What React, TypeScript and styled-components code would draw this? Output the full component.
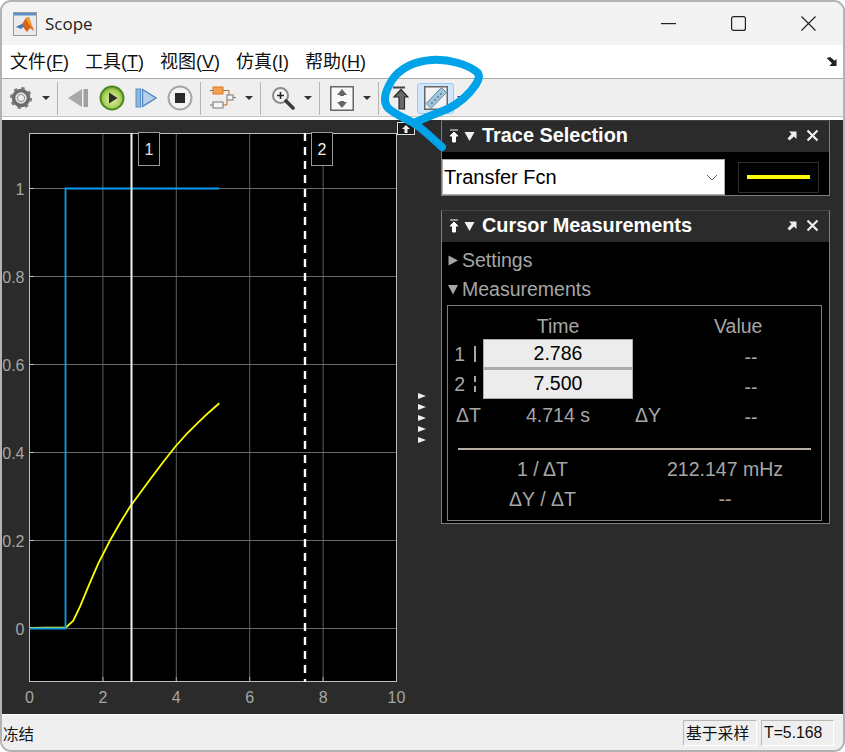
import styled, { createGlobalStyle } from 'styled-components';

const GlobalStyle = createGlobalStyle`
	html, body, #root {
		margin: 0;
		padding: 0;
		width: 845px;
		height: 752px;
		overflow: hidden;
		background: #fff;
	}
`;

const UI_FONT = `'Liberation Sans', 'Noto Sans CJK SC', sans-serif`;

const Window = styled.div`
	position: relative;
	box-sizing: border-box;
	width: 845px;
	height: 752px;
	border: 2px solid #b3b3b3;
	border-radius: 11px;
	overflow: hidden;
	display: flex;
	flex-direction: column;
	background: #f3f3f3;
	font-family: ${UI_FONT};
`;

const TitleBar = styled.div`
	height: 43px;
	flex: none;
	display: flex;
	align-items: center;
	padding-left: 11px;
	background: #f3f3f3;
`;

const AppTitle = styled.div`
	margin-left: 8px;
	font-family: 'Open Sans', sans-serif;
	font-size: 17px;
	color: #222;
`;

const WindowControls = styled.div`
	margin-left: auto;
	display: flex;
	align-items: center;
`;

const WindowControl = styled.div`
	width: 70px;
	display: flex;
	justify-content: center;
`;

const MenuBar = styled.div`
	height: 34px;
	flex: none;
	display: flex;
	align-items: center;
	background: #fff;
	padding: 0 0 3px 8px;
	gap: 16px;
	border-bottom: 1px solid #a9a9a9;
	font-size: 18px;
	color: #111;
	box-sizing: border-box;
`;

const MenuItem = styled.span`
	white-space: nowrap;
	u {
		text-underline-offset: 2px;
	}
`;

const CollapseArrow = styled.div`
	margin-left: auto;
	margin-right: 5px;
	margin-top: 3px;
	display: flex;
`;

const Toolbar = styled.div`
	height: 38px;
	flex: none;
	display: flex;
	align-items: center;
	padding-left: 2px;
	background: #efefef;
	border-bottom: 3px solid #fff;
	box-shadow: inset 0 -1px 0 #c4c4c4;
	box-sizing: content-box;
`;

const Tool = styled.div<{ $w: number; $active?: boolean }>`
	width: ${(p) => p.$w}px;
	height: 31px;
	flex: none;
	box-sizing: border-box;
	display: flex;
	align-items: center;
	justify-content: center;
	border-radius: 3px;
	${(p) =>
		p.$active &&
		`
		background: #cfe6fb;
		border: 1px solid #9cc9f2;
	`}
`;

const ToolSep = styled.div<{ $w: number }>`
	width: ${(p) => p.$w}px;
	height: 33px;
	flex: none;
	display: flex;
	justify-content: center;
	&::before {
		content: '';
		width: 1px;
		background: #b5b5b5;
	}
`;

const Caret = styled.div<{ $w: number }>`
	width: ${(p) => p.$w}px;
	flex: none;
	display: flex;
	justify-content: center;
	&::before {
		content: '';
		border-left: 4px solid transparent;
		border-right: 4px solid transparent;
		border-top: 4px solid #333;
	}
`;

const Body = styled.div`
	height: 594px;
	flex: none;
	display: flex;
	background: #2b2b2b;
	border-bottom: 1px solid #fff;
	box-sizing: content-box;
`;

const PlotPane = styled.div`
	position: relative;
	width: 416px;
	flex: none;
`;

const ChartSvg = styled.svg`
	display: block;
	font-family: ${UI_FONT};
`;

const UndockButton = styled.div`
	position: absolute;
	left: 395px;
	top: 2px;
	width: 18px;
	height: 13px;
	box-sizing: border-box;
	background: #1c1c1c;
	border: 1px solid #ddd;
	display: flex;
	align-items: center;
	justify-content: center;
`;

const Splitter = styled.div`
	width: 23px;
	flex: none;
	display: flex;
	flex-direction: column;
	align-items: flex-start;
	padding-top: 273px;
	gap: 5px;
	box-sizing: border-box;
	span {
		width: 0;
		height: 0;
		border-top: 3.5px solid transparent;
		border-bottom: 3.5px solid transparent;
		border-left: 8px solid #eee;
	}
`;

const SidePanels = styled.div`
	width: 389px;
	flex: none;
	display: flex;
	flex-direction: column;
	gap: 14px;
`;

const Panel = styled.div<{ $h: number }>`
	height: ${(p) => p.$h}px;
	box-sizing: border-box;
	border: 1px solid #7d7d7d;
	border-top-color: #444;
	background: #000;
	display: flex;
	flex-direction: column;
`;

const PanelHeader = styled.div`
	height: 31px;
	flex: none;
	box-sizing: border-box;
	display: flex;
	align-items: center;
	padding: 0 0 2px 7px;
	background: #2b2b2b;
`;

const PanelTitle = styled.div`
	margin-left: 7px;
	font-size: 19.9px;
	font-weight: 700;
	color: #fff;
	white-space: nowrap;
`;

const PanelActions = styled.div`
	margin-left: auto;
	margin-right: 10px;
	display: flex;
	align-items: center;
	gap: 9px;
`;

const TraceRow = styled.div`
	display: flex;
	align-items: center;
	padding-top: 7px;
`;

const TraceSelect = styled.div`
	width: 283px;
	height: 36px;
	box-sizing: border-box;
	flex: none;
	background: #fff;
	border: 1px solid #aaa;
	display: flex;
	align-items: center;
	padding-left: 1px;
	font-size: 20px;
	color: #000;
	svg {
		margin-left: auto;
		margin-right: 6px;
	}
`;

const LineSwatch = styled.div`
	margin-left: 13px;
	width: 81px;
	height: 31px;
	box-sizing: border-box;
	border: 1px solid #2f2f2f;
	display: flex;
	align-items: center;
	justify-content: center;
	&::before {
		content: '';
		width: 63px;
		height: 4px;
		background: #ffff00;
	}
`;

const SectionList = styled.div`
	padding-top: 4px;
`;

const SectionRow = styled.div`
	height: 29px;
	display: flex;
	align-items: center;
	padding-left: 6px;
	gap: 4px;
	font-size: 19.5px;
	color: #a6a6a6;
`;

const Measurements = styled.div`
	margin: 1px 7px 0 5px;
	height: 216px;
	box-sizing: border-box;
	border: 1px solid #7d7d7d;
	padding: 3px 0 0 0;
	color: #a6a6a6;
	font-size: 19.5px;
`;

const TimeGrid = styled.div`
	display: grid;
	grid-template-columns: 35px 150px 44px 1fr;
	grid-auto-rows: 30px;
	align-items: center;
`;

const Cell = styled.div<{ $pl?: number; $pt?: number; $center?: boolean; $col?: number }>`
	white-space: nowrap;
	${(p) => p.$col && `grid-column: ${p.$col};`}
	${(p) => p.$center && 'text-align: center;'}
	${(p) => p.$pl && `padding-left: ${p.$pl}px;`}
	${(p) => p.$pt && `padding-top: ${p.$pt}px;`}
`;

const RowLabel = styled.div`
	display: flex;
	align-items: center;
	justify-content: flex-end;
	gap: 9px;
	padding-right: 7px;
	height: 30px;
`;

const CursorMark = styled.span<{ $dashed?: boolean }>`
	width: 0;
	height: 16px;
	border-left: 2px ${(p) => (p.$dashed ? 'dashed' : 'solid')} #a6a6a6;
`;

const TimeInput = styled.div<{ $last?: boolean }>`
	height: 30px;
	box-sizing: border-box;
	background: #ececec;
	border: 1px solid #aaa;
	${(p) => !p.$last && 'border-bottom-width: 2px;'}
	color: #000;
	text-align: center;
	line-height: 26px;
`;

const ValueDash = styled(Cell)`
	text-align: center;
	padding-left: 4px;
	padding-top: 6px;
`;

const Divider = styled.div`
	height: 2px;
	margin: 19px 10px 4px 10px;
	background: #b9b0a5;
`;

const RatioGrid = styled.div`
	display: grid;
	grid-template-columns: 189px 176px;
	grid-auto-rows: 30px;
	align-items: center;
	text-align: center;
`;

const StatusBar = styled.div`
	flex: 1;
	display: flex;
	align-items: center;
	background: #efefef;
	padding-left: 1px;
	font-size: 15.5px;
	color: #111;
`;

const StatusBox = styled.div<{ $w: number }>`
	width: ${(p) => p.$w}px;
	height: 26px;
	box-sizing: border-box;
	border: 1px solid #b8b8b8;
	border-right-color: #fff;
	border-bottom-color: #fff;
	display: flex;
	align-items: center;
	padding-left: 2px;
	font-size: 15.8px;
	white-space: nowrap;
	margin-left: 4px;
`;

const StatusLeft = styled.div`
	margin-right: auto;
`;

const StatusEnd = styled.span`
	width: 9px;
`;

const HeaderGap = styled.span`
	width: 5px;
`;

const Scribble = styled.svg`
	position: absolute;
	left: -2px;
	top: -2px;
	pointer-events: none;
`;

/* chart geometry, in window coordinates */
const X_TICKS = [0, 2, 4, 6, 8, 10];
const Y_TICKS = [0, 0.2, 0.4, 0.6, 0.8, 1];
const xAt = (v: number) => 29.5 + v * 36.7;
const yAt = (v: number) => Math.floor(628.4 - v * 439.5) + 0.5;

const yellowTrace =
	'29.5,628 66,627.3 73.3,620.7 80,606.7 88.3,586.7 98.3,563.3 110,540.5 120,523 130,506.7 141,491.7 151.7,477.3 163,462.3 175,447 187,433.5 198.3,422.4 208.5,412.7 219.3,403.3';

function Plot() {
	return (
		<ChartSvg width={416} height={594} viewBox="2 120 416 594">
			<rect x={29.5} y={133} width={367} height={549} fill="#000" />
			{X_TICKS.slice(1, -1).map((v) => (
				<line key={v} x1={xAt(v)} x2={xAt(v)} y1={133} y2={682} stroke="#5f5f5f" />
			))}
			{Y_TICKS.map((v) => (
				<line key={v} x1={29.5} x2={396.5} y1={yAt(v)} y2={yAt(v)} stroke="#6a6a6a" />
			))}
			{Y_TICKS.map((v) => (
				<line key={v} x1={29.5} x2={34} y1={yAt(v)} y2={yAt(v)} stroke="#c4c4c4" />
			))}
			{X_TICKS.slice(1, -1).map((v) => (
				<line key={v} x1={xAt(v)} x2={xAt(v)} y1={677} y2={682} stroke="#b0b0b0" />
			))}
			<rect x={29.5} y={133.5} width={367} height={548} fill="none" stroke="#bdbdbd" />
			<polyline points={yellowTrace} fill="none" stroke="#ffff00" strokeWidth={1.8} />
			<polyline
				points="29.5,628.5 65.5,628.5 65.5,188.5 219,188.5"
				fill="none"
				stroke="#0b9cf2"
				strokeWidth={1.8}
			/>
			<line x1={131.5} x2={131.5} y1={133} y2={682} stroke="#f2f2f2" strokeWidth={2} />
			<line x1={305} x2={305} y1={133} y2={682} stroke="#fff" strokeWidth={2.4} strokeDasharray="8 6" />
			<rect x={138.5} y={132.5} width={21} height={33} fill="#000" stroke="#9a9a9a" />
			<text x={149} y={155} textAnchor="middle" fontSize={16} fill="#e0e0e0">1</text>
			<rect x={311.5} y={132.5} width={21} height={33} fill="#000" stroke="#9a9a9a" />
			<text x={322} y={155} textAnchor="middle" fontSize={16} fill="#f0f0f0">2</text>
			{Y_TICKS.map((v) => (
				<text key={v} x={24.5} y={yAt(v) + 6} textAnchor="end" fontSize={16} fill="#a6a6a6">
					{v}
				</text>
			))}
			{X_TICKS.map((v) => (
				<text key={v} x={xAt(v)} y={703} textAnchor="middle" fontSize={16} fill="#a6a6a6">
					{v}
				</text>
			))}
		</ChartSvg>
	);
}

const MatlabIcon = () => (
	<svg width={24} height={24} viewBox="0 0 24 24">
		<rect x={0.5} y={0.5} width={23} height={23} fill="#e8eaee" stroke="#9a9a9a" />
		<rect x={1} y={1} width={22} height={2.5} fill="#5d8fc9" />
		<path d="M3 15 L9 12 L13 6 L16 5 L21 19 L17 16 L14 20 L10 15 Z" fill="#d9621a" />
		<path d="M3 15 L9 12 L11 14 L8 17 Z" fill="#3a7fc0" />
		<path d="M13 6 L16 5 L20 17 L15 11 Z" fill="#f0a030" />
	</svg>
);

const GearIcon = () => (
	<svg width={24} height={24} viewBox="0 0 24 24">
		<circle cx={12} cy={12} r={7.5} fill="#e4e4e4" stroke="#6b6b6b" strokeWidth={3.6} />
		<circle cx={12} cy={12} r={9.8} fill="none" stroke="#7a7a7a" strokeWidth={2.4} strokeDasharray="3.4 4.3" />
		<circle cx={12} cy={12} r={3.6} fill="#efefef" stroke="#8a8a8a" strokeWidth={1} />
	</svg>
);

const StepBackIcon = () => (
	<svg width={22} height={20} viewBox="0 0 22 20">
		<path d="M15 1 V19 L1 10 Z" fill="#a8a8a8" />
		<rect x={16.5} y={1} width={4.5} height={18} fill="#a0a0a0" />
	</svg>
);

const PlayIcon = () => (
	<svg width={26} height={26} viewBox="0 0 26 26">
		<defs>
			<radialGradient id="playFill" cx="50%" cy="55%" r="55%">
				<stop offset="0%" stopColor="#e4f0a8" />
				<stop offset="70%" stopColor="#a8cf5a" />
				<stop offset="100%" stopColor="#5f9a28" />
			</radialGradient>
		</defs>
		<circle cx={13} cy={13} r={11.5} fill="url(#playFill)" stroke="#4f8c1f" strokeWidth={2} />
		<path d="M10 7.5 L18.5 13 L10 18.5 Z" fill="#2c2c2c" />
	</svg>
);

const StepForwardIcon = () => (
	<svg width={22} height={20} viewBox="0 0 22 20">
		<rect x={1} y={1} width={4.5} height={18} fill="#8fb6dc" stroke="#5c90c4" />
		<path d="M7.5 1.5 V18.5 L21 10 Z" fill="#b4d0ea" stroke="#4f88c2" strokeWidth={1.4} />
	</svg>
);

const StopIcon = () => (
	<svg width={26} height={26} viewBox="0 0 26 26">
		<circle cx={13} cy={13} r={11.5} fill="#f4f4f4" stroke="#a6a6a6" strokeWidth={2} />
		<rect x={8} y={8} width={10} height={10} fill="#2a2a2a" />
	</svg>
);

const BlocksIcon = () => (
	<svg width={26} height={26} viewBox="0 0 26 26">
		<rect x={3} y={2} width={10} height={7} fill="#f0a050" stroke="#e07a20" />
		<rect x={3} y={17} width={10} height={6} fill="#f4f4f4" stroke="#777" />
		<rect x={17} y={10} width={6} height={5} fill="#f4f4f4" stroke="#777" />
		<path d="M13 5.5 H19 V10 M17 15 V20 H13" fill="none" stroke="#b06a30" />
		<path d="M0 5.5 H3 M0 20 H3 M23 12.5 H26" stroke="#777" />
	</svg>
);

const ZoomIcon = () => (
	<svg width={24} height={24} viewBox="0 0 24 24">
		<circle cx={9.5} cy={9.5} r={7.5} fill="#f6f6f6" stroke="#8a8a8a" strokeWidth={2} />
		<path d="M6 9.5 H13 M9.5 6 V13" stroke="#222" strokeWidth={1.6} />
		<path d="M15 15 L22 22" stroke="#3a3a3a" strokeWidth={3.6} strokeLinecap="round" />
	</svg>
);

const FitIcon = () => (
	<svg width={24} height={25} viewBox="0 0 24 25">
		<rect x={0.75} y={0.75} width={22.5} height={23.5} fill="#f8f8f8" stroke="#666" strokeWidth={1.5} />
		<path d="M12 3 L17 9 H14 V10 H10 V9 H7 Z" fill="#666" />
		<path d="M12 22 L17 16 H14 V15 H10 V16 H7 Z" fill="#666" />
	</svg>
);

const CursorUpIcon = () => (
	<svg width={17} height={24} viewBox="0 0 17 24">
		<path d="M1 1.5 H13" stroke="#444" strokeWidth={2} />
		<path d="M9 3.5 L16 11 H12.5 V23 H7 V11 H2 Z" fill="#6a6a6a" stroke="#2a2a2a" strokeWidth={1.2} />
	</svg>
);

const RulerIcon = () => (
	<svg width={24} height={24} viewBox="0 0 24 24">
		<rect x={0.75} y={0.75} width={22.5} height={22.5} fill="#f4f4f4" stroke="#666" strokeWidth={1.5} />
		<path d="M17.5 1.5 L22.5 6.5 L7 22.5 L2 17.5 Z" fill="#9cc4dc" stroke="#6b8ea5" />
		<path d="M8.5 17.5 L7.5 16.5 M11.5 14.5 L10.5 13.5 M14.5 11.5 L13.5 10.5 M17.5 8.5 L16.5 7.5" stroke="#3f6176" strokeWidth={1.4} />
	</svg>
);

const PinIcon = () => (
	<svg width={10} height={14} viewBox="0 0 10 14">
		<path d="M1 1 H9 M5 3 L9 7 H6.5 V13 H3.5 V7 H1 Z" stroke="#fff" fill="#fff" strokeWidth={1} />
	</svg>
);

const DownTriangle = () => (
	<svg width={11} height={10} viewBox="0 0 11 10">
		<path d="M0.5 1 H10.5 L5.5 10 Z" fill="#f0f0f0" />
	</svg>
);

const PopOutIcon = () => (
	<svg width={10} height={10} viewBox="0 0 10 10">
		<path d="M2 0.5 H9.5 V8 L7 5.5 L2.5 9.5 L0.5 7.5 L4.5 3 Z" fill="#eee" />
	</svg>
);

const CloseIcon = () => (
	<svg width={13} height={13} viewBox="0 0 13 13">
		<path d="M1.5 1.5 L11.5 11.5 M11.5 1.5 L1.5 11.5" stroke="#eee" strokeWidth={2.2} />
	</svg>
);

function PanelBar({ title }: { title: string }) {
	return (
		<PanelHeader>
			<PinIcon />
			<HeaderGap />
			<DownTriangle />
			<PanelTitle>{title}</PanelTitle>
			<PanelActions>
				<PopOutIcon />
				<CloseIcon />
			</PanelActions>
		</PanelHeader>
	);
}

export default function App() {
	return (
		<>
			<GlobalStyle />
			<Window>
				<TitleBar>
					<MatlabIcon />
					<AppTitle>Scope</AppTitle>
					<WindowControls>
						<WindowControl>
							<svg width={15} height={2} viewBox="0 0 15 2">
								<rect width={15} height={1.2} fill="#222" />
							</svg>
						</WindowControl>
						<WindowControl>
							<svg width={15} height={15} viewBox="0 0 15 15">
								<rect x={0.6} y={0.6} width={13.8} height={13.8} rx={2} fill="none" stroke="#222" strokeWidth={1.2} />
							</svg>
						</WindowControl>
						<WindowControl>
							<svg width={15} height={15} viewBox="0 0 15 15">
								<path d="M0.5 0.5 L14.5 14.5 M14.5 0.5 L0.5 14.5" stroke="#222" strokeWidth={1.2} />
							</svg>
						</WindowControl>
					</WindowControls>
				</TitleBar>
				<MenuBar>
					<MenuItem>文件(<u>F</u>)</MenuItem>
					<MenuItem>工具(<u>T</u>)</MenuItem>
					<MenuItem>视图(<u>V</u>)</MenuItem>
					<MenuItem>仿真(<u>I</u>)</MenuItem>
					<MenuItem>帮助(<u>H</u>)</MenuItem>
					<CollapseArrow>
						<svg width={12} height={10} viewBox="0 0 12 11">
							<path d="M0 1 L4 0 L9 4 L11 2 V10 H3 L6 7 Z" fill="#222" />
						</svg>
					</CollapseArrow>
				</MenuBar>
				<Toolbar>
					<Tool $w={34}><GearIcon /></Tool>
					<Caret $w={16} />
					<ToolSep $w={7} />
					<Tool $w={34}><StepBackIcon /></Tool>
					<Tool $w={34}><PlayIcon /></Tool>
					<Tool $w={34}><StepForwardIcon /></Tool>
					<Tool $w={34}><StopIcon /></Tool>
					<ToolSep $w={6} />
					<Tool $w={40}><BlocksIcon /></Tool>
					<Caret $w={12} />
					<ToolSep $w={10} />
					<Tool $w={36}><ZoomIcon /></Tool>
					<Caret $w={14} />
					<ToolSep $w={8} />
					<Tool $w={38}><FitIcon /></Tool>
					<Caret $w={12} />
					<ToolSep $w={10} />
					<Tool $w={34}><CursorUpIcon /></Tool>
					<Tool $w={37} $active><RulerIcon /></Tool>
					<Caret $w={14} />
				</Toolbar>
				<Body>
					<PlotPane>
						<Plot />
						<UndockButton>
							<svg width={10} height={9} viewBox="0 0 10 9">
								<path d="M5 1 L9 5 H6.5 V9 H3.5 V5 H1 Z" fill="#eee" />
							</svg>
						</UndockButton>
					</PlotPane>
					<Splitter>
						<span />
						<span />
						<span />
						<span />
						<span />
					</Splitter>
					<SidePanels>
						<Panel $h={76}>
							<PanelBar title="Trace Selection" />
							<TraceRow>
								<TraceSelect>
									Transfer Fcn
									<svg width={12} height={7} viewBox="0 0 12 7">
										<path d="M1 1 L6 6 L11 1" fill="none" stroke="#666" />
									</svg>
								</TraceSelect>
								<LineSwatch />
							</TraceRow>
						</Panel>
						<Panel $h={314}>
							<PanelBar title="Cursor Measurements" />
							<SectionList>
								<SectionRow>
									<svg width={10} height={11} viewBox="0 0 10 11">
										<path d="M0.5 0.5 V10.5 L10 5.5 Z" fill="#a6a6a6" />
									</svg>
									Settings
								</SectionRow>
								<SectionRow>
									<svg width={10} height={11} viewBox="0 0 10 11">
										<path d="M0 1 H10 L5 10.5 Z" fill="#a6a6a6" />
									</svg>
									Measurements
								</SectionRow>
							</SectionList>
							<Measurements>
								<TimeGrid>
									<Cell $col={2} $center $pt={4}>Time</Cell>
									<Cell $col={4} $pl={37} $pt={4}>Value</Cell>
									<RowLabel>1<CursorMark /></RowLabel>
									<TimeInput>2.786</TimeInput>
									<ValueDash $col={4}>--</ValueDash>
									<RowLabel>2<CursorMark $dashed /></RowLabel>
									<TimeInput $last>7.500</TimeInput>
									<ValueDash $col={4}>--</ValueDash>
									<Cell $pl={8} $pt={3}>ΔT</Cell>
									<Cell $center $pt={3}>4.714 s</Cell>
									<Cell $pl={2} $pt={3}>ΔY</Cell>
									<ValueDash>--</ValueDash>
								</TimeGrid>
								<Divider />
								<RatioGrid>
									<Cell>1 / ΔT</Cell>
									<Cell>212.147 mHz</Cell>
									<Cell>ΔY / ΔT</Cell>
									<Cell>--</Cell>
								</RatioGrid>
							</Measurements>
						</Panel>
					</SidePanels>
				</Body>
				<StatusBar>
					<StatusLeft>冻结</StatusLeft>
					<StatusBox $w={74}>基于采样</StatusBox>
					<StatusBox $w={73}>T=5.168</StatusBox>
					<StatusEnd />
				</StatusBar>
				<Scribble width={845} height={752} viewBox="0 0 845 752">
					<path
						d="M442 147 C432 138 424 130 415 124 C405 118 394 114 388 108 C383 102 384 93 392 80 C400 68 415 61 432 60 C448 59 468 64 478 73 C481 78 476 85 470 92 C461 102 452 108 440 112 C432 115 425 118 416 122"
						fill="none"
						stroke="#00a2e8"
						strokeWidth={8}
						strokeLinecap="round"
						strokeLinejoin="round"
					/>
				</Scribble>
			</Window>
		</>
	);
}
